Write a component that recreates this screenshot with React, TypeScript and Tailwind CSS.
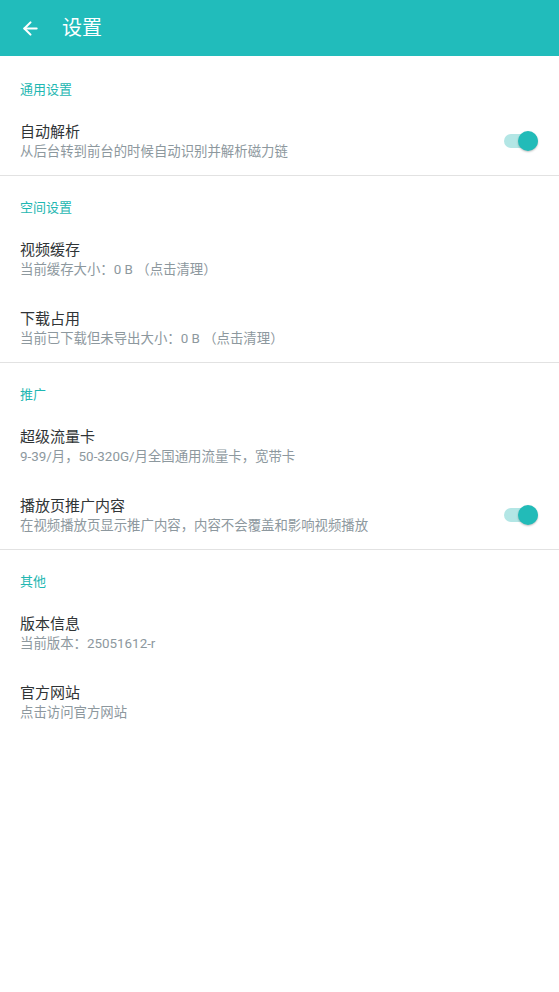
import { ArrowLeft } from "lucide-react";

type Item = { title: string; subtitle: string; toggle?: boolean };
type Section = { label: string; items: Item[] };

const sections: Section[] = [
  {
    label: "通用设置",
    items: [{ title: "自动解析", subtitle: "从后台转到前台的时候自动识别并解析磁力链", toggle: true }],
  },
  {
    label: "空间设置",
    items: [
      { title: "视频缓存", subtitle: "当前缓存大小：0 B （点击清理）" },
      { title: "下载占用", subtitle: "当前已下载但未导出大小：0 B （点击清理）" },
    ],
  },
  {
    label: "推广",
    items: [
      { title: "超级流量卡", subtitle: "9-39/月，50-320G/月全国通用流量卡，宽带卡" },
      { title: "播放页推广内容", subtitle: "在视频播放页显示推广内容，内容不会覆盖和影响视频播放", toggle: true },
    ],
  },
  {
    label: "其他",
    items: [
      { title: "版本信息", subtitle: "当前版本：25051612-r" },
      { title: "官方网站", subtitle: "点击访问官方网站" },
    ],
  },
];

function Toggle() {
  return (
    <div className="relative mr-[21px] h-[20px] w-[34px] shrink-0">
      <div className="absolute left-0 right-0 top-[3px] h-[14px] rounded-full bg-[#b3e6e5]" />
      <div className="absolute right-0 top-0 h-[20px] w-[20px] rounded-full bg-[#22bbb8] shadow-[0_1px_2px_rgba(0,0,0,0.25)]" />
    </div>
  );
}

export default function App() {
  return (
    <div
      className="min-h-[992px] w-full bg-white"
      style={{ fontFamily: "Roboto, 'Noto Sans CJK SC', sans-serif" }}
    >
      <header className="flex h-[56px] items-center bg-[#21bcbb] text-white">
        <ArrowLeft className="ml-[20px] h-[21px] w-[21px]" strokeWidth={2.4} />
        <h1 className="ml-[21px] text-[20px] font-normal leading-none">设置</h1>
      </header>

      {sections.map((section, i) => (
        <section
          key={section.label}
          className={i < sections.length - 1 ? "border-b border-[#e2e2e2]" : ""}
        >
          <div
            className={`px-[20px] pb-[7px] text-[13px] leading-[18px] text-[#1fb7b2] ${
              i === 0 ? "pt-[25px]" : "pt-[23px]"
            }`}
          >
            {section.label}
          </div>
          {section.items.map((item) => (
            <div key={item.title} className="flex items-center pb-[14px] pl-[20px] pt-[15px]">
              <div className="min-w-0 flex-1">
                <div className="text-[15px] leading-[22px] text-[#303436]">{item.title}</div>
                <div className="text-[13.4px] leading-[18px] text-[#8d989e]">{item.subtitle}</div>
              </div>
              {item.toggle ? <Toggle /> : null}
            </div>
          ))}
        </section>
      ))}
    </div>
  );
}
